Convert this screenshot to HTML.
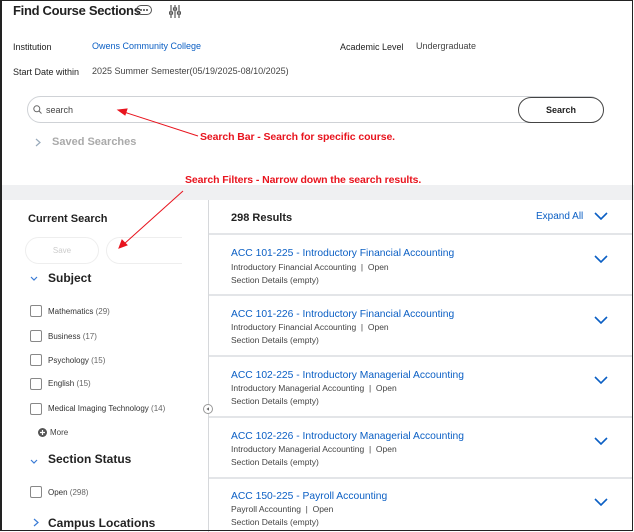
<!DOCTYPE html>
<html><head><style>
*{margin:0;padding:0;box-sizing:border-box}
body{width:634px;height:532px;position:relative;overflow:hidden;background:#fff;font-family:"Liberation Sans",Arial,sans-serif;color:#333}
.a{position:absolute;white-space:nowrap}
.frame{position:absolute;left:0;top:0;width:633px;height:531px;border:1px solid #222;border-left-width:2px;z-index:10;pointer-events:none}
.lbl{font-size:9px;color:#222}
.val{font-size:9px;color:#444}
.blue{color:#0b5fc4}
.red{color:#e8141e;font-weight:bold;font-size:10.5px;letter-spacing:-0.1px}
.cb{position:absolute;left:30px;width:12px;height:12px;border:1px solid #888;border-radius:2px}
.ct{position:absolute;left:48px;font-size:8px;color:#333}
.ct span{color:#666}
.sep{position:absolute;left:209px;width:423px;height:2px;background:#e3e5e8}
.t{position:absolute;left:231px;font-size:10.3px;color:#0b5fc4}
.s{position:absolute;left:231px;font-size:8.5px;color:#444}
.chev{position:absolute;left:594px;width:14px;height:8px}
</style></head><body>
<div class="frame"></div>
<div class="a" style="left:13px;top:3px;font-size:13px;font-weight:bold;color:#222;letter-spacing:-0.3px">Find Course Sections</div>
<div class="a" style="left:136px;top:5px;width:16px;height:10px;border:1px solid #555;border-radius:6px"></div>
<svg class="a" style="left:136px;top:5px" width="16" height="10"><circle cx="5" cy="5" r="1" fill="#444"/><circle cx="8" cy="5" r="1" fill="#444"/><circle cx="11" cy="5" r="1" fill="#444"/></svg>
<svg class="a" style="left:169px;top:5px" width="12" height="13" viewBox="0 0 12 13"><g stroke="#555" stroke-width="1.2" fill="none"><line x1="2" y1="0" x2="2" y2="13"/><line x1="6" y1="0" x2="6" y2="13"/><line x1="10" y1="0" x2="10" y2="13"/><rect x="0.5" y="7" width="3" height="2" fill="#fff"/><rect x="4.5" y="3" width="3" height="2" fill="#fff"/><rect x="8.5" y="7" width="3" height="2" fill="#fff"/></g></svg>
<div class="a lbl" style="left:13px;top:42px">Institution</div>
<div class="a val blue" style="left:92px;top:41px">Owens Community College</div>
<div class="a lbl" style="left:340px;top:42px">Academic Level</div>
<div class="a val" style="left:416px;top:41px">Undergraduate</div>
<div class="a lbl" style="left:13px;top:67px">Start Date within</div>
<div class="a val" style="left:92px;top:66px">2025 Summer Semester(05/19/2025-08/10/2025)</div>
<div class="a" style="left:27px;top:96px;width:576px;height:27px;border:1px solid #cfd2d6;border-radius:14px"></div>
<svg class="a" style="left:33px;top:105px" width="9" height="9" viewBox="0 0 9 9"><circle cx="3.8" cy="3.8" r="3" stroke="#666" fill="none"/><line x1="6" y1="6" x2="8.5" y2="8.5" stroke="#666"/></svg>
<div class="a" style="left:46px;top:105px;font-size:9px;color:#444">search</div>
<div class="a" style="left:518px;top:97px;width:86px;height:26px;border:1px solid #444;border-radius:13px;background:#fff;font-size:9px;font-weight:bold;text-align:center;line-height:24px;color:#222">Search</div>
<svg class="a" style="left:35px;top:138px" width="6" height="9"><polyline points="1,1 5,4.5 1,8" stroke="#9ab" stroke-width="1.2" fill="none"/></svg>
<div class="a" style="left:52px;top:136px;font-size:11px;font-weight:bold;color:#aaa">Saved Searches</div>
<div class="a red" style="left:200px;top:131px">Search Bar - Search for specific course.</div>
<div class="a red" style="left:185px;top:174px">Search Filters - Narrow down the search results.</div>
<div class="a" style="left:0;top:185px;width:634px;height:15px;background:#eff0f2"></div>
<div class="a" style="left:208px;top:200px;width:1px;height:332px;background:#d6d8db"></div>
<div class="a" style="left:28px;top:213px;font-size:11px;font-weight:bold;color:#222">Current Search</div>
<div class="a" style="left:25px;top:237px;width:74px;height:27px;border:1px solid #eee;border-radius:14px;font-size:8px;color:#ccc;text-align:center;line-height:25px">Save</div>
<div class="a" style="left:106px;top:237px;width:76px;height:27px;border:1px solid #eee;border-right:none;border-radius:14px 0 0 14px"></div>
<svg class="a" style="left:30px;top:276px" width="8" height="5"><polyline points="1,1 4,4 7,1" stroke="#3a7bd5" stroke-width="1.2" fill="none"/></svg>
<div class="a" style="left:48px;top:271px;font-size:12px;font-weight:bold;color:#222">Subject</div>
<div class="cb" style="top:305px"></div><div class="ct" style="top:307px">Mathematics <span>(29)</span></div>
<div class="cb" style="top:330px"></div><div class="ct" style="top:332px">Business <span>(17)</span></div>
<div class="cb" style="top:354px"></div><div class="ct" style="top:356px">Psychology <span>(15)</span></div>
<div class="cb" style="top:378px"></div><div class="ct" style="top:379px">English <span>(15)</span></div>
<div class="cb" style="top:403px"></div><div class="ct" style="top:404px">Medical Imaging Technology <span>(14)</span></div>
<svg class="a" style="left:38px;top:428px" width="9" height="9"><circle cx="4.5" cy="4.5" r="4.5" fill="#555"/><path d="M4.5 2v5M2 4.5h5" stroke="#fff" stroke-width="1.2"/></svg>
<div class="a" style="left:50px;top:428px;font-size:8px;color:#444">More</div>
<svg class="a" style="left:30px;top:459px" width="8" height="5"><polyline points="1,1 4,4 7,1" stroke="#3a7bd5" stroke-width="1.2" fill="none"/></svg>
<div class="a" style="left:48px;top:452px;font-size:12px;font-weight:bold;color:#222">Section Status</div>
<div class="cb" style="top:486px"></div><div class="ct" style="top:488px">Open <span>(298)</span></div>
<svg class="a" style="left:33px;top:518px" width="6" height="9"><polyline points="1,1 5,4.5 1,8" stroke="#3a7bd5" stroke-width="1.2" fill="none"/></svg>
<div class="a" style="left:48px;top:516px;font-size:12px;font-weight:bold;color:#222">Campus Locations</div>
<svg class="a" style="left:203px;top:404px" width="10" height="10"><circle cx="5" cy="5" r="4.5" stroke="#999" fill="#fff"/><polygon points="3.5,5 6,3.3 6,6.7" fill="#666"/></svg>
<svg class="a" style="left:0;top:0;pointer-events:none" width="634" height="532"><g stroke="#e8141e" stroke-width="1" fill="#e8141e"><line x1="198" y1="136" x2="124" y2="112"/><polygon points="118,110 127,109 125,115"/><line x1="183" y1="191" x2="124" y2="244"/><polygon points="119,248 122,240 127,245"/></g></svg>
<div class="a" style="left:231px;top:212px;font-size:11px;font-weight:bold;color:#222">298 Results</div>
<div class="a blue" style="left:536px;top:211px;font-size:10px">Expand All</div>
<svg class="a" style="left:594px;top:212px" width="14" height="8"><polyline points="1,1 7,7 13,1" stroke="#0b5fc4" stroke-width="1.6" fill="none"/></svg>
<div class="sep" style="top:233px"></div>
<div class="t" style="top:248px">ACC 101-225 - Introductory Financial Accounting</div>
<div class="s" style="top:262px">Introductory Financial Accounting &nbsp;| &nbsp;Open</div>
<div class="s" style="top:275px">Section Details (empty)</div>
<svg class="chev" style="top:255px"><polyline points="1,1 7,7 13,1" stroke="#0b5fc4" stroke-width="1.6" fill="none"/></svg>
<div class="sep" style="top:294px"></div>
<div class="t" style="top:309px">ACC 101-226 - Introductory Financial Accounting</div>
<div class="s" style="top:322px">Introductory Financial Accounting &nbsp;| &nbsp;Open</div>
<div class="s" style="top:335px">Section Details (empty)</div>
<svg class="chev" style="top:316px"><polyline points="1,1 7,7 13,1" stroke="#0b5fc4" stroke-width="1.6" fill="none"/></svg>
<div class="sep" style="top:355px"></div>
<div class="t" style="top:370px">ACC 102-225 - Introductory Managerial Accounting</div>
<div class="s" style="top:383px">Introductory Managerial Accounting &nbsp;| &nbsp;Open</div>
<div class="s" style="top:396px">Section Details (empty)</div>
<svg class="chev" style="top:376px"><polyline points="1,1 7,7 13,1" stroke="#0b5fc4" stroke-width="1.6" fill="none"/></svg>
<div class="sep" style="top:416px"></div>
<div class="t" style="top:431px">ACC 102-226 - Introductory Managerial Accounting</div>
<div class="s" style="top:444px">Introductory Managerial Accounting &nbsp;| &nbsp;Open</div>
<div class="s" style="top:457px">Section Details (empty)</div>
<svg class="chev" style="top:437px"><polyline points="1,1 7,7 13,1" stroke="#0b5fc4" stroke-width="1.6" fill="none"/></svg>
<div class="sep" style="top:477px"></div>
<div class="t" style="top:491px">ACC 150-225 - Payroll Accounting</div>
<div class="s" style="top:504px">Payroll Accounting &nbsp;| &nbsp;Open</div>
<div class="s" style="top:517px">Section Details (empty)</div>
<svg class="chev" style="top:498px"><polyline points="1,1 7,7 13,1" stroke="#0b5fc4" stroke-width="1.6" fill="none"/></svg>
</body></html>
